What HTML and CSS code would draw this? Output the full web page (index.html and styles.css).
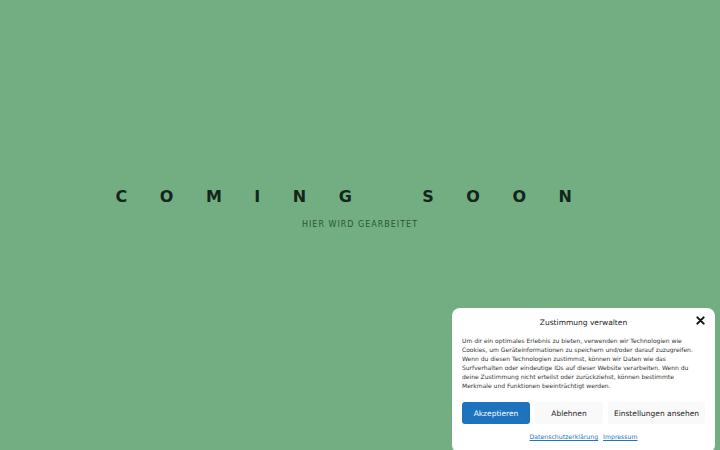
FILE: index.html
```html
<!DOCTYPE html>
<html lang="de">
<head>
<meta charset="utf-8">
<title>Coming Soon</title>
<link rel="stylesheet" href="styles.css">
</head>
<body>
<main class="page">
  <div class="hero">
    <h1 class="title">COMING SOON</h1>
    <p class="subtitle">HIER WIRD GEARBEITET</p>
  </div>
</main>
<div class="consent">
  <div class="consent-head">
    <span class="consent-title">Zustimmung verwalten</span>
    <span class="consent-close" aria-label="Schließen">
      <svg viewBox="0 0 10 10" width="9" height="9"><path d="M1.5 1.5 L8.5 8.5 M8.5 1.5 L1.5 8.5" stroke="#111" stroke-width="2.2" stroke-linecap="round"/></svg>
    </span>
  </div>
  <p class="consent-text">Um dir ein optimales Erlebnis zu bieten, verwenden wir Technologien wie Cookies, um Geräteinformationen zu speichern und/oder darauf zuzugreifen. Wenn du diesen Technologien zustimmst, können wir Daten wie das Surfverhalten oder eindeutige IDs auf dieser Website verarbeiten. Wenn du deine Zustimmung nicht erteilst oder zurückziehst, können bestimmte Merkmale und Funktionen beeinträchtigt werden.</p>
  <div class="consent-buttons">
    <button class="btn btn-accept">Akzeptieren</button>
    <button class="btn btn-light">Ablehnen</button>
    <button class="btn btn-light btn-wide">Einstellungen ansehen</button>
  </div>
  <div class="consent-links">
    <a href="#">Datenschutzerklärung</a>
    <a href="#">Impressum</a>
  </div>
</div>
</body>
</html>
```
FILE: styles.css
```css
html, body {
  margin: 0;
  padding: 0;
  height: 100%;
}
body {
  background: #72ae82;
  font-family: "DejaVu Sans", sans-serif;
  overflow: hidden;
}
.page {
  height: 100vh;
  display: flex;
  align-items: center;
  justify-content: center;
  padding-bottom: 34px;
  box-sizing: border-box;
}
.hero {
  text-align: center;
}
.title {
  margin: 0;
  font-size: 16px;
  font-weight: bold;
  letter-spacing: 32.5px;
  line-height: 20px;
  color: #14261a;
}
.subtitle {
  margin: 13px 0 0;
  font-size: 8px;
  letter-spacing: 1px;
  line-height: 10px;
  color: #2b5636;
}
.consent {
  position: fixed;
  left: 452px;
  top: 308px;
  width: 263px;
  box-sizing: border-box;
  background: #fff;
  border-radius: 8px;
  padding: 5px 10px 12px;
  color: #222;
}
.consent-head {
  position: relative;
  text-align: center;
  height: 14px;
  line-height: 14px;
}
.consent-title {
  font-size: 7.5px;
  color: #222;
}
.consent-close {
  position: absolute;
  right: 0;
  top: 2px;
  width: 10px;
  height: 10px;
  display: flex;
  align-items: center;
  justify-content: center;
}
.consent-text {
  margin: 9px 0 0;
  font-size: 6px;
  line-height: 9px;
  color: #333;
  opacity: 0.99;
}
.consent-buttons {
  display: flex;
  gap: 5px;
  margin-top: 12px;
}
.btn {
  font-family: "DejaVu Sans", sans-serif;
  font-size: 7.5px;
  height: 22px;
  border: 0;
  border-radius: 3px;
  padding: 0;
  width: 68px;
  flex: none;
}
.btn-accept {
  background: #1e73be;
  color: #fff;
}
.btn-light {
  background: #f9f9f9;
  color: #222;
}
.btn-wide {
  flex: 1;
}
.consent-links {
  display: flex;
  justify-content: center;
  gap: 5px;
  margin-top: 8px;
  font-size: 6.2px;
  line-height: 9px;
  opacity: 0.99;
}
.consent-links a {
  color: #1e73be;
}
```
